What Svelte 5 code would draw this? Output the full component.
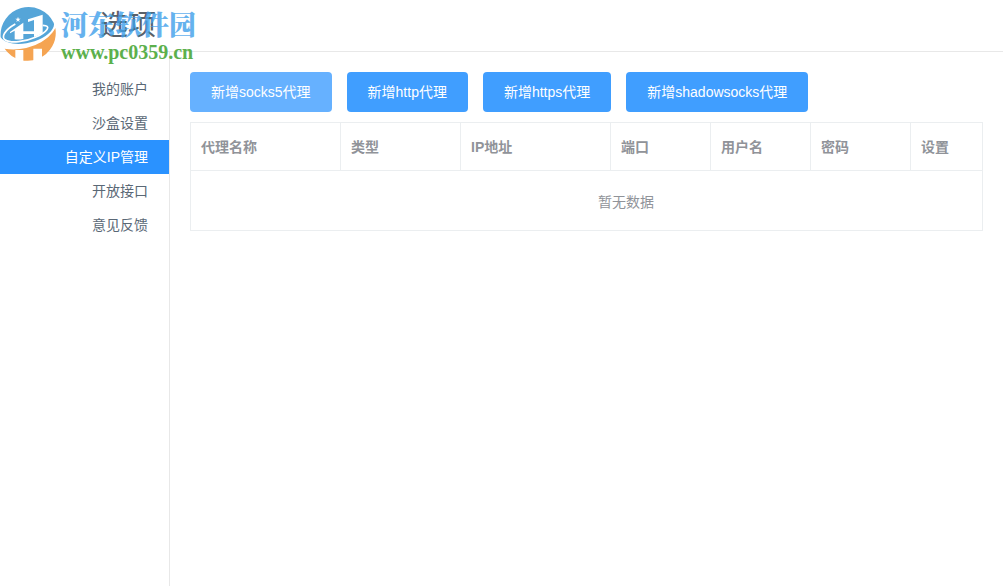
<script lang="ts">
  const menu = ["我的账户", "沙盒设置", "自定义IP管理", "开放接口", "意见反馈"];
  const kinds = ["socks5", "http", "https", "shadowsocks"];
  const columns = [
    { label: "代理名称", width: 150 },
    { label: "类型", width: 120 },
    { label: "IP地址", width: 150 },
    { label: "端口", width: 100 },
    { label: "用户名", width: 100 },
    { label: "密码", width: 100 },
    { label: "设置", width: 150 },
  ];

  let current = $state(2);
  let focused = $state(0);
</script>

<div class="page">
  <header>
    <h1>选项</h1>
  </header>

  <div class="body">
    <nav>
      {#each menu as item, i}
        <a href="#{i}" class:active={i === current} onclick={() => (current = i)}>{item}</a>
      {/each}
    </nav>

    <main>
      <div class="buttons">
        {#each kinds as kind, i}
          <button class:focused={i === focused} onclick={() => (focused = i)}>新增{kind}代理</button>
        {/each}
      </div>

      <div class="table-wrap">
        <table>
          <colgroup>
            {#each columns as col}
              <col style="width: {col.width}px" />
            {/each}
          </colgroup>
          <thead>
            <tr>
              {#each columns as col}
                <th>{col.label}</th>
              {/each}
            </tr>
          </thead>
          <tbody>
            <tr>
              <td colspan={columns.length}>暂无数据</td>
            </tr>
          </tbody>
        </table>
      </div>
    </main>
  </div>

  <div class="mark">
    <svg viewBox="0 0 168 168" width="56" height="56" aria-hidden="true">
      <!-- sky and ground halves -->
      <path fill="#55a5d8" d="M2 94A84 84 0 0 1 161 50C168 68 140 94 104 106C66 118 20 118 2 94Z" />
      <path fill="#f5a452" d="M14 128C74 138 142 112 166 66A84 84 0 0 1 14 128Z" />
      <!-- towers -->
      <path fill="#fff" d="M30 78L70 50V99C60 101 52 101 44 100V74L30 82ZM84 40L128 26V80C120 86 112 90 102 93V42L84 48ZM70 76H102V84H70Z" />
      <path fill="#fff" d="M46 132H70V168H46ZM100 128H126V168H100Z" />
      <!-- orbit -->
      <path fill="none" stroke="#fff" stroke-width="5" d="M46 54C14 72 2 94 16 102C32 112 76 108 106 94C140 80 158 58 128 58" />
      <path fill="#fff" d="M54 32L56 38L62 38L57 42L59 48L54 44L49 48L51 42L46 38L52 38Z" />
    </svg>
    <div>
      <div class="mark-name">河东软件园</div>
      <div class="mark-url">www.pc0359.cn</div>
    </div>
  </div>
</div>

<style>
  :global(body) {
    margin: 0;
    background: #fff;
  }
  .page {
    position: relative;
    min-height: 100vh;
    display: flex;
    flex-direction: column;
    font-family: "Liberation Sans", "Noto Sans CJK SC", sans-serif;
    font-size: 14px;
    color: #5a6876;
  }
  header {
    height: 51px;
    border-bottom: 1px solid #e8e8e8;
  }
  h1 {
    margin: 0;
    padding-left: 100px;
    font-size: 28px;
    font-weight: 400;
    line-height: 52px;
    color: #5a6068;
  }
  .body {
    flex: 1;
    display: flex;
  }
  nav {
    width: 169px;
    padding-top: 20px;
    border-right: 1px solid #e8e8e8;
  }
  nav a {
    display: block;
    padding-right: 21px;
    line-height: 34px;
    text-align: right;
    text-decoration: none;
    color: inherit;
  }
  nav a.active {
    background: #2a92ff;
    color: #fff;
  }
  main {
    flex: 1;
    min-width: 0;
    padding: 20px;
  }
  .buttons {
    display: flex;
    gap: 15px;
    margin-bottom: 10px;
  }
  button {
    height: 40px;
    padding: 0 21px 2px;
    border: none;
    border-radius: 4px;
    background: #409eff;
    color: #fff;
    font: inherit;
    cursor: pointer;
  }
  button.focused {
    background: #66b1ff;
  }
  .table-wrap {
    overflow: hidden;
    border: 1px solid #ebeef0;
  }
  table {
    width: 870px;
    table-layout: fixed;
    border-collapse: separate;
    border-spacing: 0;
    color: #909399;
  }
  th {
    box-sizing: border-box;
    height: 48px;
    padding: 0 10px 2px;
    border-right: 1px solid #ebeef0;
    border-bottom: 1px solid #ebeef0;
    text-align: left;
    font-weight: 700;
  }
  td {
    height: 59px;
    padding: 0;
    text-align: center;
  }
  .mark {
    position: absolute;
    top: 6px;
    left: 0;
    display: flex;
    gap: 5px;
    pointer-events: none;
  }
  .mark-name {
    font-family: "Noto Serif CJK SC", "Noto Sans CJK SC", sans-serif;
    font-size: 27px;
    font-weight: 900;
    line-height: 36px;
    color: #3fa0ea;
    opacity: 0.8;
  }
  .mark-url {
    font-family: "Liberation Serif", serif;
    font-size: 20px;
    font-weight: 700;
    line-height: 20px;
    color: #5cb04c;
  }
</style>
